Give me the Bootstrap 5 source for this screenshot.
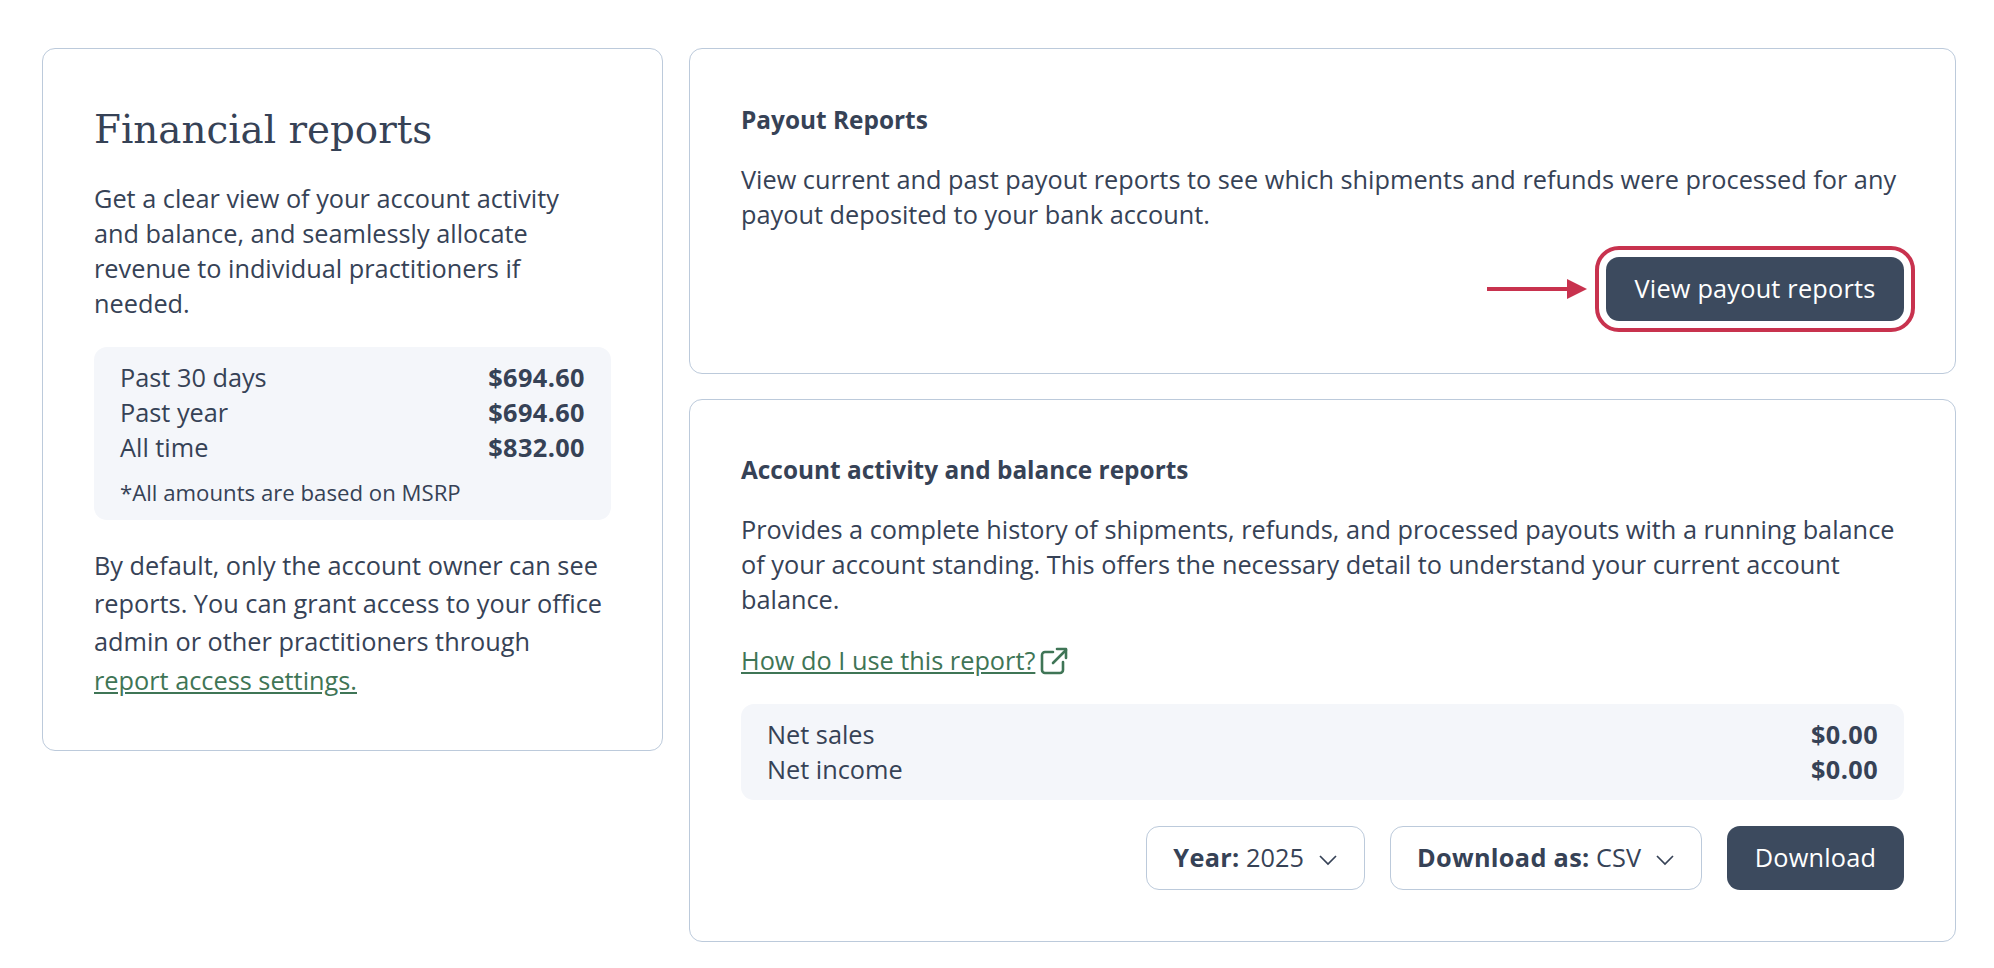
<!DOCTYPE html>
<html lang="en">
<head>
    <meta charset="UTF-8">
    <title>Financial reports</title>
    <link href="https://cdn.jsdelivr.net/npm/bootstrap@5.3.2/dist/css/bootstrap.min.css" rel="stylesheet">
    <style>
        body {
            background: #fff;
            color: #364256;
            font-family: "Open Sans", "Lato", sans-serif;
            font-size: 25.3px;
            line-height: 35px;
        }
        .page-wrap {
            padding: 48px 38px 0 42px;
            gap: 26px;
            align-items: flex-start;
        }
        .side-col { width: 621px; flex: none; }
        .main-col { flex: 1; gap: 25px; }
        .report-box {
            border: 1.5px solid #bccadb;
            border-radius: 13px;
            background: #fff;
        }
        .side-box { padding: 46px 51px 51px; }
        .payout-box { height: 326px; padding: 53px 51px 0; }
        .activity-box { height: 543px; padding: 52px 51px 0; }
        h1.side-title {
            font-family: "DejaVu Serif", serif;
            font-size: 38.8px;
            font-weight: 400;
            line-height: 50px;
            margin: 10px 0 26px;
        }
        .box-title { font-size: 24.4px; font-weight: 700; line-height: 35px; margin: 0 0 25px; }
        .box-text { margin: 0; }
        .stat-panel {
            background: #f4f6fa;
            border-radius: 13px;
            padding: 13px 26px;
        }
        .stat-panel strong { letter-spacing: .4px; }
        .side-panel { margin: 26px 0 26px; padding-bottom: 12px; }
        .stat-note { font-size: 22.2px; line-height: 30px; margin-top: 13px; }
        .access-text { line-height: 38.2px; margin: 0; }
        .green-link { color: #3f7556; }
        .ext-icon { width: 28px; height: 28px; vertical-align: -5px; margin-left: 5px; }
        .help-line { margin: 26px 0 26px; }
        .dark-btn {
            background: #3c4a5e;
            border: 0;
            border-radius: 13px;
            color: #fff;
            font-size: 25.3px;
            height: 64px;
            padding: 0 26px;
            letter-spacing: .2px;
        }
        .dark-btn:hover { background: #3c4a5e; color: #fff; }
        .marked-btn { width: 298px; outline: 4px solid #c8324e; outline-offset: 7px; }
        .arrow-mark { width: 100px; height: 22px; margin-right: 19px; }
        .payout-row { margin-top: 25px; }
        .pick-btn {
            background: #fff;
            border: 1.5px solid #bccadb;
            border-radius: 13px;
            color: #364256;
            font-size: 25.3px;
            height: 64px;
            padding: 0 26px;
        }
        .pick-btn strong { letter-spacing: .3px; }
        .pick-btn svg { width: 20px; height: 12px; margin-left: 14px; }
        .control-row { margin-top: 26px; gap: 25px; }
        .control-row .dark-btn { width: 177px; }
    </style>
</head>
<body>
    <div class="d-flex page-wrap">
        <div class="side-col report-box side-box">
            <h1 class="side-title">Financial reports</h1>
            <p class="box-text">Get a clear view of your account activity<br>and balance, and seamlessly allocate<br>revenue to individual practitioners if<br>needed.</p>
            <div class="stat-panel side-panel">
                <div class="d-flex justify-content-between"><span>Past 30 days</span><strong>$694.60</strong></div>
                <div class="d-flex justify-content-between"><span>Past year</span><strong>$694.60</strong></div>
                <div class="d-flex justify-content-between"><span>All time</span><strong>$832.00</strong></div>
                <div class="stat-note">*All amounts are based on MSRP</div>
            </div>
            <p class="access-text">By default, only the account owner can see reports. You can grant access to your office admin or other practitioners through<br><a href="#" class="green-link">report access settings.</a></p>
        </div>
        <div class="d-flex flex-column main-col">
            <div class="report-box payout-box">
                <h2 class="box-title">Payout Reports</h2>
                <p class="box-text">View current and past payout reports to see which shipments and refunds were processed for any payout deposited to your bank account.</p>
                <div class="d-flex justify-content-end align-items-center payout-row">
                    <svg class="arrow-mark" viewBox="0 0 100 22"><path d="M0 11H82" stroke="#c8324e" stroke-width="4"/><path d="M80 1l20 10-20 10z" fill="#c8324e"/></svg>
                    <button class="btn dark-btn marked-btn" type="button">View payout reports</button>
                </div>
            </div>
            <div class="report-box activity-box">
                <h2 class="box-title">Account activity and balance reports</h2>
                <p class="box-text">Provides a complete history of shipments, refunds, and processed payouts with a running balance<br>of your account standing. This offers the necessary detail to understand your current account<br>balance.</p>
                <p class="help-line"><a href="#" class="green-link">How do I use this report?</a><svg class="ext-icon" viewBox="0 0 28 28" fill="none" stroke="#3f7556" stroke-width="2.6" stroke-linecap="round" stroke-linejoin="round"><path d="M13 5H5a3 3 0 0 0-3 3v15a3 3 0 0 0 3 3h15a3 3 0 0 0 3-3v-8"/><path d="M13 16 26 3"/><path d="M17 2h9v9"/></svg></p>
                <div class="stat-panel">
                    <div class="d-flex justify-content-between"><span>Net sales</span><strong>$0.00</strong></div>
                    <div class="d-flex justify-content-between"><span>Net income</span><strong>$0.00</strong></div>
                </div>
                <div class="d-flex justify-content-end control-row">
                    <button class="btn pick-btn" type="button"><strong>Year:</strong> 2025<svg viewBox="0 0 20 12" fill="none" stroke="#364256" stroke-width="1.7"><path d="M2 2l8 8 8-8"/></svg></button>
                    <button class="btn pick-btn" type="button"><strong>Download as:</strong> CSV<svg viewBox="0 0 20 12" fill="none" stroke="#364256" stroke-width="1.7"><path d="M2 2l8 8 8-8"/></svg></button>
                    <button class="btn dark-btn" type="button">Download</button>
                </div>
            </div>
        </div>
    </div>
    <script src="https://cdn.jsdelivr.net/npm/bootstrap@5.3.2/dist/js/bootstrap.bundle.min.js"></script>
</body>
</html>
